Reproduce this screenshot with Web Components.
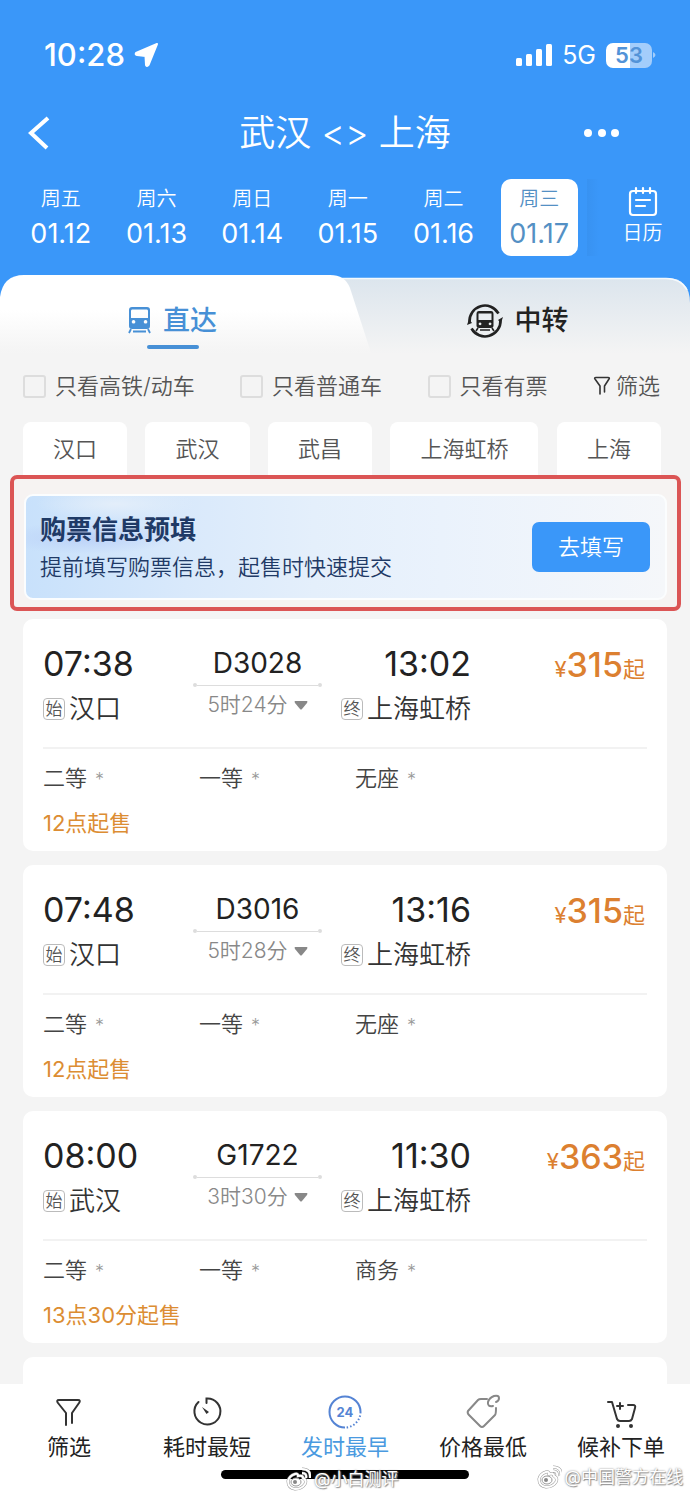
<!DOCTYPE html>
<html lang="zh-CN">
<head>
<meta charset="utf-8">
<meta name="viewport" content="width=device-width, initial-scale=1">
<title>武汉 - 上海</title>
<style>
  body {
    margin: 0;
    font-family: Inter, "Noto Sans CJK SC", sans-serif;
    font-size: 22px;
    line-height: 32px;
    color: #333;
    background: #f4f4f4;
    --blue: #3a97f9;
    --orange: #dc8030;
    --thin: 350;
  }
</style>
</head>
<body>
<train-app>
  <div slot="header">
    <status-bar time="10:28" battery="53"></status-bar>
    <route-bar>武汉 &lt;&gt; 上海</route-bar>
    <date-strip>
      <date-item day="周五" date="01.12"></date-item>
      <date-item day="周六" date="01.13"></date-item>
      <date-item day="周日" date="01.14"></date-item>
      <date-item day="周一" date="01.15"></date-item>
      <date-item day="周二" date="01.16"></date-item>
      <date-item day="周三" date="01.17" selected></date-item>
    </date-strip>
  </div>

  <route-tabs></route-tabs>
  <filter-row>
    <filter-check>只看高铁/动车</filter-check>
    <filter-check>只看普通车</filter-check>
    <filter-check>只看有票</filter-check>
  </filter-row>
  <station-row>
    <station-chip>汉口</station-chip>
    <station-chip>武汉</station-chip>
    <station-chip>武昌</station-chip>
    <station-chip>上海虹桥</station-chip>
    <station-chip>上海</station-chip>
  </station-row>
  <prefill-banner>
    <span slot="title">购票信息预填</span>
    <span slot="text">提前填写购票信息，起售时快速提交</span>
    <span slot="action">去填写</span>
  </prefill-banner>
  <train-list></train-list>

  <sort-bar slot="footer"></sort-bar>
</train-app>

<script>
const trains = [
  { start: "07:38", from: "汉口", code: "D3028", time: "5时24分", end: "13:02", to: "上海虹桥", price: 315, seats: ["二等", "一等", "无座"], sale: "12点起售" },
  { start: "07:48", from: "汉口", code: "D3016", time: "5时28分", end: "13:16", to: "上海虹桥", price: 315, seats: ["二等", "一等", "无座"], sale: "12点起售" },
  { start: "08:00", from: "武汉", code: "G1722", time: "3时30分", end: "11:30", to: "上海虹桥", price: 363, seats: ["二等", "一等", "商务"], sale: "13点30分起售" },
];

class BaseElement extends HTMLElement {
  constructor() {
    super();
    this.attachShadow({ mode: "open" });
  }

  connectedCallback() {
    this.shadowRoot.innerHTML = this.render();
  }
}

class TrainApp extends BaseElement {
  render() {
    return `
        <style>
            :host{
                display: flex;
                flex-direction: column;
                height: 100vh;
                overflow: hidden;
            }

            header{
                background: var(--blue);
                color: white;
                padding-bottom: 19px;
                flex: none;
            }

            main{
                flex: 1;
                min-height: 0;
                overflow: hidden;
            }
        </style>
        <header><slot name="header"></slot></header>
        <main><slot></slot></main>
        <slot name="footer"></slot>
    `;
  }
}
customElements.define("train-app", TrainApp);

class StatusBar extends BaseElement {
  render() {
    return `
        <style>
            :host{
                display: flex;
                align-items: center;
                height: 110px;
                padding: 0 33px 0 44px;
            }

            .time{
                font-size: 31px;
                font-weight: 500;
                margin-right: 9px;
            }

            .signal{
                margin-left: auto;
            }

            .net{
                font-size: 25px;
                font-weight: 400;
                margin: 0 10px;
            }

            .battery{
                width: 46px;
                height: 25px;
                border-radius: 7px;
                background: linear-gradient(90deg, white 53%, #a3cdfb 53%);
                color: #5293d8;
                font-size: 22px;
                font-weight: 600;
                line-height: 25px;
                text-align: center;
            }
        </style>
        <span class="time">${this.getAttribute("time")}</span>
        <svg width="25" height="26" viewBox="0 0 25 26" fill="white" stroke="white" stroke-width="2" stroke-linejoin="round"><path d="M23 2 L2 11 Q1 12.500 3 13 L11.500 14 L12 23 Q13 25 14.500 23 Z"/></svg>
        <svg class="signal" width="36" height="24" viewBox="0 0 36 24" fill="white">
            <rect x="0" y="15" width="6" height="8" rx="1.500"/>
            <rect x="10" y="11" width="6" height="12" rx="1.500"/>
            <rect x="20" y="6" width="6" height="17" rx="1.500"/>
            <rect x="30" y="1" width="6" height="22" rx="1.500"/>
        </svg>
        <span class="net">5G</span>
        <span class="battery">${this.getAttribute("battery")}</span>
        <svg width="5" height="10" viewBox="0 0 5 10" fill="#a3cdfb"><path d="M1 2 Q6 5 1 8 Z"/></svg>
    `;
  }
}
customElements.define("status-bar", StatusBar);

class RouteBar extends BaseElement {
  render() {
    return `
        <style>
            :host{
                display: grid;
                grid-template-columns: 106px 1fr 106px;
                align-items: center;
                height: 46px;
            }

            h1{
                margin: 0;
                font-size: 36px;
                line-height: 46px;
                font-weight: var(--thin);
                text-align: center;
            }

            button{
                display: flex;
                border: none;
                background: none;
                padding: 0;
            }

            .back{
                padding-left: 27px;
            }
        </style>
        <button class="back" aria-label="返回"><svg width="24" height="34" viewBox="0 0 24 34" fill="none" stroke="white" stroke-width="4"><path d="M21 2 L4 17 L20 32"/></svg></button>
        <h1><slot></slot></h1>
        <button class="more" aria-label="更多"><svg width="36" height="10" viewBox="0 0 36 10" fill="white"><circle cx="4" cy="5" r="4"/><circle cx="18" cy="5" r="4"/><circle cx="31" cy="5" r="4"/></svg></button>
    `;
  }
}
customElements.define("route-bar", RouteBar);

class DateStrip extends BaseElement {
  render() {
    return `
        <style>
            :host{
                display: flex;
                margin-top: 23px;
                padding-left: 13px;
            }

            .days{
                display: flex;
                flex: 1;
            }

            .calendar{
                box-sizing: border-box;
                width: 103px;
                border: none;
                background: linear-gradient(90deg, #3892f1, #3a97f9 12px);
                color: inherit;
                font: inherit;
                font-size: 20px;
                line-height: 28px;
                font-weight: var(--thin);
                display: flex;
                flex-direction: column;
                align-items: center;
                gap: 2px;
                padding: 7px 0 0 8px;
            }
        </style>
        <div class="days"><slot></slot></div>
        <button class="calendar">
            <svg width="30" height="31" viewBox="0 0 30 31" fill="none" stroke="white" stroke-width="2.200" stroke-linecap="round"><rect x="2" y="5" width="26" height="24" rx="3"/><path d="M8 2 V7 M15 2 V7 M22 2 V7 M8 14 H22 M8 20 H17"/></svg>
            日历
        </button>
    `;
  }
}
customElements.define("date-strip", DateStrip);

class DateItem extends BaseElement {
  render() {
    return `
        <style>
            :host{
                display: flex;
                flex: 1;
                justify-content: center;
            }

            button{
                display: flex;
                flex-direction: column;
                align-items: center;
                gap: 3px;
                width: 77px;
                padding: 6px 0 4px;
                border: none;
                border-radius: 10px;
                background: none;
                color: inherit;
                font: inherit;
            }

            .day{
                font-size: 20px;
                line-height: 28px;
                font-weight: var(--thin);
            }

            .date{
                font-size: 27px;
                line-height: 36px;
            }

            :host([selected]) button{
                background: white;
                color: #5490c4;
            }
        </style>
        <button>
            <span class="day">${this.getAttribute("day")}</span>
            <span class="date">${this.getAttribute("date")}</span>
        </button>
    `;
  }
}
customElements.define("date-item", DateItem);

class RouteTabs extends BaseElement {
  render() {
    return `
        <style>
            :host{
                display: grid;
                grid-template-columns: 1fr 1fr;
                height: 87px;
                position: relative;
            }

            .shape{
                position: absolute;
                width: 100%;
                height: 100%;
                z-index: -1;
            }

            button{
                display: flex;
                align-items: center;
                justify-content: center;
                gap: 12px;
                height: 91px;
                border: none;
                background: none;
                color: #222;
                font: inherit;
                font-size: 27px;
                font-weight: 500;
                padding: 0;
                position: relative;
            }

            .active{
                color: #4790d6;
            }

            .active::after{
                content: "";
                position: absolute;
                left: calc(50% - 26px);
                top: 70px;
                width: 52px;
                height: 4px;
                border-radius: 2px;
                background: #4790d6;
            }
        </style>
        <svg class="shape" viewBox="0 0 690 87" preserveAspectRatio="none">
            <defs>
                <linearGradient id="on" x2="0" y2="1"><stop offset="0.400" stop-color="#fff"/><stop offset="0.900" stop-color="#f4f4f4"/></linearGradient>
                <linearGradient id="off" x2="0" y2="1"><stop offset="0" stop-color="#dce5ed"/><stop offset="0.900" stop-color="#f4f4f4"/></linearGradient>
            </defs>
            <rect width="690" height="40" fill="#3a97f9"/>
            <path d="M300 3 H666 Q690 3 690 28 V87 H300 Z" fill="url(#off)"/>
            <path d="M330 3.500 H666 Q681 3.500 687 15" fill="none" stroke="#f4f9fd" stroke-width="1.500"/>
            <path d="M0 87 V22 Q3 0 24 0 H330 Q345 0 350 13 L374 87 Z" fill="url(#on)"/>
        </svg>
        <button class="active">
            <svg width="23" height="27" viewBox="0 0 23 27" fill="#4790d6"><path fill-rule="evenodd" d="M4 0 H19 Q22 0 22 3 V19 Q22 22 19 22 H4 Q1 22 1 19 V3 Q1 0 4 0 Z M4 2.500 Q3 2.500 3 4 V11 H20 V4 Q20 2.500 19 2.500 Z M5.500 13 a1.800 1.800 0 1 0 0.100 0 Z M17.500 13 a1.800 1.800 0 1 0 0.100 0 Z"/><path d="M3 22 L1 26 M20 22 L22 26 M5 24.500 H18" stroke="#4790d6" stroke-width="1.800"/></svg>
            直达
        </button>
        <button>
            <svg width="36" height="36" viewBox="0 0 36 36"><path d="M2.500 19 A15.500 15.500 0 0 1 31.500 10.500 M33.500 17 A15.500 15.500 0 0 1 4.500 25.500" fill="none" stroke="#222" stroke-width="2.600"/><path d="M0 22 L2 16 L5 20 Z M36 14 L34 20 L31 17 Z" fill="#222"/><path fill="#222" fill-rule="evenodd" d="M12 8 H24 Q26.500 8 26.500 11 V23 Q26.500 25 24 25 H12 Q9.500 25 9.500 23 V11 Q9.500 8 12 8 Z M11.500 10.500 V17 H24.500 V10.500 Z M13 19.500 a1.400 1.400 0 1 0 0.100 0 Z M23 19.500 a1.400 1.400 0 1 0 0.100 0 Z"/><path d="M11 25 L9 28 M25 25 L27 28 M13 27 H23" stroke="#222" stroke-width="1.600"/></svg>
            中转
        </button>
    `;
  }
}
customElements.define("route-tabs", RouteTabs);

class FilterRow extends BaseElement {
  render() {
    return `
        <style>
            :host{
                display: flex;
                justify-content: space-between;
                align-items: center;
                height: 48px;
                padding: 0 30px 0 23px;
            }

            button{
                display: flex;
                align-items: center;
                gap: 5px;
                border: none;
                background: none;
                padding: 0;
                font: inherit;
                font-weight: var(--thin);
                color: #555;
            }
        </style>
        <slot></slot>
        <button>
            <svg width="18" height="20" viewBox="0 0 18 20" fill="none" stroke="#333" stroke-width="1.600" stroke-linejoin="round" stroke-linecap="round"><path d="M7 18 V10 L2 3 Q1 1.500 3 1.500 H15 Q17 1.500 16 3 L11.500 10 V16"/></svg>
            筛选
        </button>
    `;
  }
}
customElements.define("filter-row", FilterRow);

class FilterCheck extends BaseElement {
  render() {
    return `
        <style>
            :host{
                display: block;
                color: #555;
                font-weight: var(--thin);
            }

            label{
                display: flex;
                align-items: center;
                gap: 9px;
            }

            input{
                appearance: none;
                box-sizing: border-box;
                width: 23px;
                height: 23px;
                margin: 0;
                border: 2px solid #ddd;
                border-radius: 3px;
            }
        </style>
        <label><input type="checkbox"><span><slot></slot></span></label>
    `;
  }
}
customElements.define("filter-check", FilterCheck);

class StationRow extends BaseElement {
  render() {
    return `
        <style>
            :host{
                display: flex;
                justify-content: space-between;
                padding: 12px 29px 0 23px;
            }
        </style>
        <slot></slot>
    `;
  }
}
customElements.define("station-row", StationRow);

class StationChip extends BaseElement {
  render() {
    return `
        <style>
            button{
                display: block;
                height: 53px;
                padding: 0 30px;
                border: none;
                border-radius: 8px 8px 0 0;
                background: white;
                color: #555;
                font: inherit;
                font-weight: var(--thin);
                white-space: nowrap;
            }
        </style>
        <button><slot></slot></button>
    `;
  }
}
customElements.define("station-chip", StationChip);

class PrefillBanner extends BaseElement {
  render() {
    return `
        <style>
            :host{
                display: block;
                margin: 0 9px 0 10px;
                padding: 15px 10px 7px;
                border: 4px solid #db5555;
                border-radius: 7px;
                background: #f6f3f2;
            }

            .card{
                box-sizing: border-box;
                height: 106px;
                display: flex;
                align-items: center;
                justify-content: space-between;
                padding: 0 15px 0 14px;
                border: 2px solid #fbfdfe;
                border-radius: 9px;
                background:
                    radial-gradient(ellipse 90px 16px at 60px 42px, #bcd2f8, transparent),
                    radial-gradient(ellipse 80px 16px at 90px 8px, #e3eefa, transparent),
                    linear-gradient(90deg, #c8e1fb, #d9e9fb 25%, #e4effb 45%, #eaf2fc 65%, #f5f7fa);
                color: #1f3a66;
            }

            .title{
                font-size: 26px;
                line-height: 38px;
                font-weight: 700;
                padding-top: 2px;
            }

            .text{
                line-height: 36px;
                font-weight: var(--thin);
            }

            button{
                width: 118px;
                height: 50px;
                border: none;
                border-radius: 7px;
                background: var(--blue);
                color: white;
                font: inherit;
                font-weight: var(--thin);
            }
        </style>
        <div class="card">
            <div>
                <div class="title"><slot name="title"></slot></div>
                <div class="text"><slot name="text"></slot></div>
            </div>
            <button><slot name="action"></slot></button>
        </div>
    `;
  }
}
customElements.define("prefill-banner", PrefillBanner);

class TrainList extends BaseElement {
  connectedCallback() {
    super.connectedCallback();
    trains.forEach((train) => {
      const card = document.createElement("train-card");
      card.train = train;
      this.shadowRoot.append(card);
    });
    // the next card only peeks out above the sort bar
    this.shadowRoot.append(document.createElement("train-card"));
  }

  render() {
    return `
        <style>
            :host{
                display: flex;
                flex-direction: column;
                gap: 14px;
                padding: 8px 23px 0;
            }
        </style>
    `;
  }
}
customElements.define("train-list", TrainList);

class TrainCard extends BaseElement {
  render() {
    const t = this.train;
    return `
        <style>
            :host{
                display: block;
                box-sizing: border-box;
                height: 232px;
                padding: 24px 20px 0;
                border-radius: 10px;
                background: white;
            }

            .trip{
                display: grid;
                grid-template-columns: 150fr 129fr 149fr 176fr;
                height: 106px;
                box-sizing: border-box;
                border-bottom: 2px solid #f2f2f2;
            }

            .time{
                font-size: 34px;
                line-height: 42px;
                color: #222;
            }

            .station{
                display: flex;
                align-items: center;
                gap: 4px;
                margin-top: 5px;
                font-size: 26px;
                line-height: 38px;
                font-weight: var(--thin);
            }

            .tag{
                box-sizing: border-box;
                width: 22px;
                height: 22px;
                border: 1px solid #bbb;
                border-radius: 4px;
                font-size: 17px;
                line-height: 20px;
                text-align: center;
                color: #555;
            }

            .middle{
                text-align: center;
            }

            .code{
                font-size: 28px;
                line-height: 40px;
                color: #222;
            }

            .line{
                display: flex;
                align-items: center;
            }

            .line::before, .line::after{
                content: "";
                width: 4px;
                height: 4px;
                border-radius: 2px;
                background: #ddd;
            }

            .line i{
                flex: 1;
                height: 1px;
                background: #ddd;
            }

            .length{
                display: flex;
                align-items: center;
                justify-content: center;
                gap: 6px;
                border: none;
                background: none;
                width: 100%;
                padding: 2px 0 0;
                color: #888;
                font: inherit;
                font-size: 21px;
                font-weight: var(--thin);
            }

            .arrive{
                display: flex;
                flex-direction: column;
                align-items: flex-end;
            }

            .price{
                text-align: right;
                color: var(--orange);
                font-size: 22px;
                line-height: 44px;
                padding-right: 2px;
            }

            .price b{
                font-size: 34px;
                font-weight: 500;
            }

            .seats{
                display: grid;
                grid-template-columns: 156fr 156fr 292fr;
                margin-top: 13px;
                font-weight: var(--thin);
                color: #444;
            }

            .seats i{
                font-style: normal;
                font-size: 18px;
                color: #999;
                margin-left: 8px;
            }

            .sale{
                color: #dc8d33;
                margin-top: 11px;
            }
        </style>
        ${!t ? "" : `
        <div class="trip">
            <div>
                <div class="time">${t.start}</div>
                <div class="station"><span class="tag">始</span>${t.from}</div>
            </div>
            <div class="middle">
                <div class="code">${t.code}</div>
                <div class="line"><i></i></div>
                <button class="length">${t.time}<svg width="14" height="9" viewBox="0 0 14 9" fill="#888"><path d="M1 0 H13 Q14 0.500 13 2 L8 8 Q7 9 6 8 L1 2 Q0 0.500 1 0 Z"/></svg></button>
            </div>
            <div class="arrive">
                <div class="time">${t.end}</div>
                <div class="station"><span class="tag">终</span>${t.to}</div>
            </div>
            <div class="price">¥<b>${t.price}</b>起</div>
        </div>
        <div class="seats">${t.seats.map((s) => `<span>${s}<i>*</i></span>`).join("")}</div>
        <div class="sale">${t.sale}</div>
        `}
    `;
  }
}
customElements.define("train-card", TrainCard);

class SortBar extends BaseElement {
  render() {
    const eye = `<svg width="25" height="24" viewBox="0 0 25 24"><g fill="none" stroke="#999" stroke-width="3"><path d="M2 14 Q3 9 9 7 Q12 6 12 9 Q17 8 17 11 Q21 13 19 17 Q16 22 9 22 Q2 21 2 14 Z M16 6 Q21 6 20 11 M16 2 Q25 2 24 11"/></g><g fill="none" stroke="white" stroke-width="2"><path d="M2 14 Q3 9 9 7 Q12 6 12 9 Q17 8 17 11 Q21 13 19 17 Q16 22 9 22 Q2 21 2 14 Z M16 6 Q21 6 20 11 M16 2 Q25 2 24 11"/></g><ellipse cx="10" cy="15" rx="5" ry="4" fill="white" stroke="#999"/><circle cx="9" cy="15" r="2" fill="#888"/></svg>`;
    return `
        <style>
            :host{
                display: block;
                flex: none;
                height: 110px;
                background: white;
                position: relative;
            }

            nav{
                display: grid;
                grid-template-columns: repeat(5, 1fr);
            }

            button{
                display: flex;
                flex-direction: column;
                align-items: center;
                gap: 1px;
                padding: 10px 0 0;
                border: none;
                background: none;
                color: #222;
                font: inherit;
            }

            .active{
                color: #4a9ae0;
            }

            .home{
                position: absolute;
                left: 32%;
                right: 32%;
                bottom: 15px;
                height: 9px;
                border-radius: 5px;
                background: black;
            }

            .mark{
                position: absolute;
                display: flex;
                align-items: center;
                gap: 3px;
                font-size: 17px;
                line-height: 24px;
                color: white;
                text-shadow: 0 0 2px #777, 1px 1px 1px #999;
                bottom: 3px;
                left: 286px;
            }

            .mark.right{
                left: auto;
                right: 7px;
                bottom: 5px;
            }
        </style>
        <nav>
            <button>
                <svg width="36" height="36" viewBox="0 0 36 36" fill="none" stroke="#333" stroke-width="2" stroke-linecap="round" stroke-linejoin="round"><path d="M15 31 V19 L7 9 Q5 6 8 6 H27 Q30 6 28 9 L21 19 V29"/></svg>
                筛选
            </button>
            <button>
                <svg width="36" height="36" viewBox="0 0 36 36" fill="none" stroke="#333" stroke-width="2" stroke-linecap="round"><path d="M17.500 9 V4.500 A13 13 0 1 1 9.500 8"/><path d="M13 13 L20 18 L17.500 20 Z" fill="#333" stroke="none"/></svg>
                耗时最短
            </button>
            <button class="active">
                <svg width="36" height="36" viewBox="0 0 36 36" fill="none" stroke="#5584d4" stroke-width="2"><path d="M18 33.500 A15.500 15.500 0 1 1 33.500 18"/><path d="M33.500 18 A15.500 15.500 0 0 1 18 33.500" stroke-dasharray="1.500 2"/><text x="18" y="23" fill="#5584d4" stroke="none" font-size="13" font-weight="700" text-anchor="middle">24</text></svg>
                发时最早
            </button>
            <button>
                <svg width="36" height="36" viewBox="0 0 36 36" fill="none" stroke="#888" stroke-width="2" stroke-linecap="round" stroke-linejoin="round"><path d="M22 5 L16 5 Q14 5 13 6 L3 17 Q2 19 4 21 L15 32 Q17 34 19 32 L30 21 Q31 20 31 14"/><path d="M28 12 Q22 13 23 8 Q24 4 29 2 Q34 1 34 4 Q34 7 31 8"/></svg>
                价格最低
            </button>
            <button>
                <svg width="36" height="36" viewBox="0 0 36 36" fill="none" stroke="#333" stroke-width="2" stroke-linecap="round" stroke-linejoin="round"><path d="M5 8 H9 L14 25 Q15 27 17 27 H26 Q28 27 29 25 L32 14 Q33 11 30 11 H25 M17 9 V15 M14 12 H20"/><circle cx="15" cy="32" r="1" fill="#333"/><circle cx="28" cy="32" r="1" fill="#333"/></svg>
                候补下单
            </button>
        </nav>
        <div class="home"></div>
        <div class="mark">${eye}@小白测评</div>
        <div class="mark right">${eye}@中国警方在线</div>
    `;
  }
}
customElements.define("sort-bar", SortBar);
</script>
</body>
</html>
